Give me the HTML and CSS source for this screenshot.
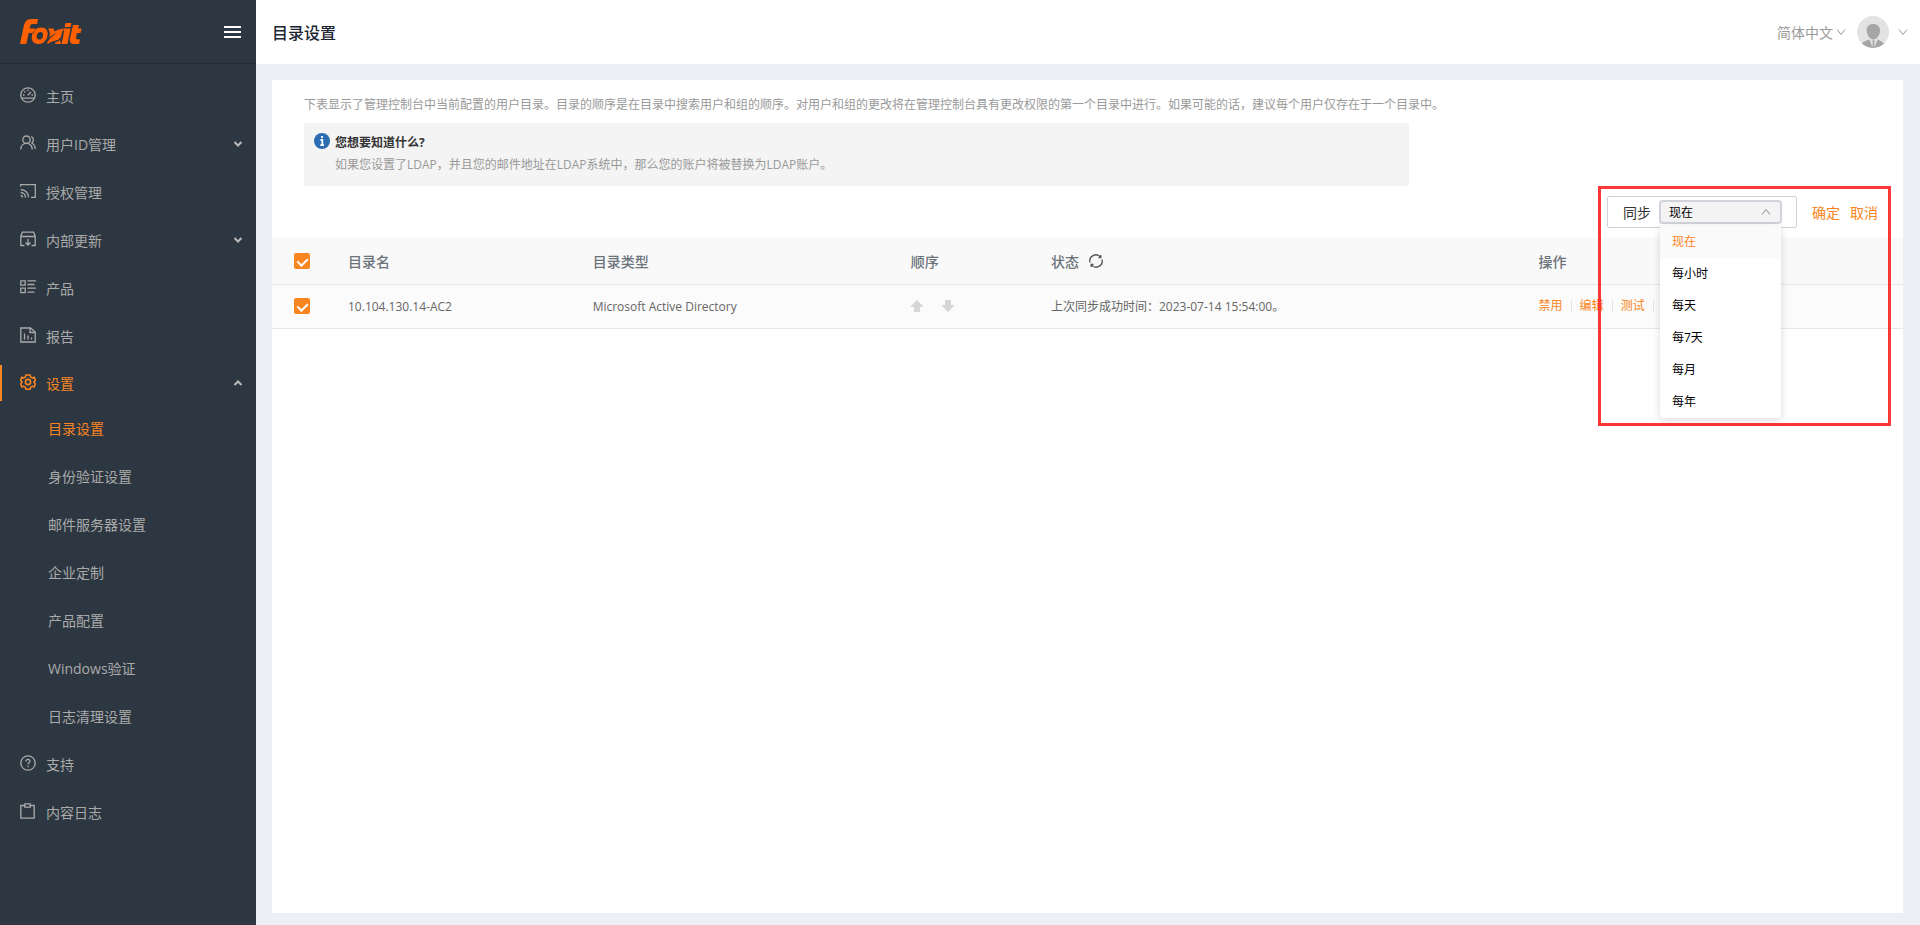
FILE: index.html
```html
<!DOCTYPE html>
<html lang="zh-CN">
<head>
<meta charset="utf-8">
<title>目录设置</title>
<link rel="stylesheet" href="styles.css">
</head>
<body>
<div class="app">
  <aside class="sidebar">
    <div class="brand">
      <a href="#" class="logo" aria-label="Foxit">
        <svg width="62" height="26" viewBox="0 0 62 26" fill="#ff6100">
          <path fill-rule="evenodd" d="M0 25 4 6Q5.500 0 11 0H18L17 5H12Q10.500 5 10 7.500L9.700 9.500H15L14 14H8.700L6.300 25ZM21 8.500C26 8.500 28.500 12 27.500 16.500 26.500 22 23 25 18.500 25 13.500 25 11 21.500 12 17 13 11.500 16.500 8.500 21 8.500ZM20.500 13C18.500 13 17.200 14.500 16.800 17 16.400 19.300 17.200 20.600 19.200 20.600 21.300 20.600 22.600 19.200 23 16.700 23.400 14.300 22.500 13 20.500 13Z"/>
          <path d="M28 9.500H33.500L34.500 12.500Q38 9.800 44 9.500 41.500 13 41.500 16 40.500 21 34 22 30.500 22.500 28 25L27 24Q30 18 37 14 31 16 28.500 19.500 31.500 14 28 9.500ZM35 23.300Q38.500 22.800 40 21L41 25H35.500ZM45.500 4H51.500L50.600 8H44.700ZM44 9.500H50.500L47.500 25H41.500L43.500 15.500ZM53 6H59L58 9.500H61.500L60.500 14H57L56 18.500Q55.700 20.500 58 20.500H60L59 25H54Q49 25 50 19.500Z"/>
        </svg>
      </a>
      <button class="burger" aria-label="折叠菜单"><span></span><span></span><span></span></button>
    </div>
    <nav class="menu">
      <a href="#" class="item">
        <svg class="ico" viewBox="0 0 16 16"><circle cx="8" cy="8" r="7.200"/><path d="M1.800 11.200H14.200M7.800 8.300 11 5M8 2.500V4M3 8H4.500M11.500 8H13M4.300 4.300 5.300 5.300"/></svg>
        <span>主页</span></a>
      <a href="#" class="item">
        <svg class="ico" viewBox="0 0 16 16"><circle cx="6.500" cy="4.700" r="3.700"/><path d="M.8 14.500C.8 10.800 3.200 8.400 6.500 8.400S12.200 10.800 12.200 14.500M11.200 1.500C14 2.500 14 6.500 11.800 8 14 9.200 15.200 11.500 15.200 14"/></svg>
        <span>用户ID管理</span>
        <svg class="caret" viewBox="0 0 10 8"><path d="M1.500 2 5 5.500 8.500 2"/></svg></a>
      <a href="#" class="item">
        <svg class="ico" viewBox="0 0 16 16"><path d="M.7 3.500V1.700H15.300V14.300H11M.7 6.500C5 6.500 8.500 10 8.500 14.500M.7 9.500C3.500 9.500 5.500 11.500 5.500 14.500M.7 12.500Q2.500 12.500 2.500 14.500"/></svg>
        <span>授权管理</span></a>
      <a href="#" class="item">
        <svg class="ico" viewBox="0 0 16 16"><path d="M4.500 14.500H.8V5L2.500 1.200H13.500L15.200 5V14.500H11.500M.8 5.500H15.200M8 8V14M5.500 11.500 8 14 10.500 11.500"/></svg>
        <span>内部更新</span>
        <svg class="caret" viewBox="0 0 10 8"><path d="M1.500 2 5 5.500 8.500 2"/></svg></a>
      <a href="#" class="item">
        <svg class="ico" viewBox="0 0 16 16"><path d="M.8 1.800H5.200V6.200H.8ZM.8 9.200H5.200V13.600H.8ZM7.500 1.800H16M7.500 5.500H14.500M7.500 9.200H16M7.500 13.200H14.500"/></svg>
        <span>产品</span></a>
      <a href="#" class="item">
        <svg class="ico" viewBox="0 0 16 16"><path d="M.8 1H10.500L15.200 5V15H.8ZM10 1V5.500H15M4.500 6.500V12.500M8 8.500V12.500M11.500 10.500V12.500"/></svg>
        <span>报告</span></a>
      <a href="#" class="item open">
        <svg class="ico" viewBox="0 0 16 16"><path d="M6 1H10L10.600 3 12.400 3.900 14.300 3.300 15.400 6.400 13.900 8 15.400 9.800 14.200 12.800 12.200 12.300 10.600 13.200 10 15.200H6L5.400 13.200 3.800 12.300 1.800 12.800 .6 9.800 2.100 8 .6 6.400 1.700 3.300 3.600 3.900 5.400 3Z"/><circle cx="8" cy="8" r="2.600"/></svg>
        <span>设置</span>
        <svg class="caret" viewBox="0 0 10 8"><path d="M1.500 6 5 2.500 8.500 6"/></svg></a>
      <div class="submenu">
        <a href="#" class="current">目录设置</a>
        <a href="#">身份验证设置</a>
        <a href="#">邮件服务器设置</a>
        <a href="#">企业定制</a>
        <a href="#">产品配置</a>
        <a href="#">Windows验证</a>
        <a href="#">日志清理设置</a>
      </div>
      <a href="#" class="item">
        <svg class="ico" viewBox="0 0 16 16"><circle cx="8" cy="8" r="7.200"/><path d="M6 6.500C6 3.800 10 3.800 10 6.300 10 7.800 8 7.800 8 9.500M8 10.700V12.200"/></svg>
        <span>支持</span></a>
      <a href="#" class="item">
        <svg class="ico" viewBox="0 0 16 16"><path d="M4.500 2.500H.8V15.200H14.200V2.500H10.500M4.800 .8H10.200V4.200H4.800Z"/></svg>
        <span>内容日志</span></a>
    </nav>
  </aside>

  <div class="page">
    <header class="topbar">
      <h1>目录设置</h1>
      <div class="account">
        <button class="lang">简体中文<svg class="chev" viewBox="0 0 10 8"><path d="M1 1.500 5 6.500 9 1.500"/></svg></button>
        <button class="user" aria-label="用户">
          <svg width="32" height="32" viewBox="0 0 32 32"><circle cx="16" cy="16" r="16" fill="#e3e3e3"/><path d="M16 8C20.500 8 23 10.500 23 14.500 23 19 20 23.500 16.500 23.500S9.700 19 9.700 14.500C9.700 10.500 12 8 16 8ZM5 27.500Q7 25 12.500 23.500L15.500 31.500 15.700 26 15 24.500H18L17.200 26 17.600 31.500 20.500 23.500Q25 25 27 27.500A16 16 0 0 1 5 27.500Z" fill="#a6a6a6"/></svg>
          <svg class="chev" viewBox="0 0 10 8"><path d="M1 1.500 5 6.500 9 1.500"/></svg>
        </button>
      </div>
    </header>

    <main class="card">
      <p class="intro">下表显示了管理控制台中当前配置的用户目录。目录的顺序是在目录中搜索用户和组的顺序。对用户和组的更改将在管理控制台具有更改权限的第一个目录中进行。如果可能的话，建议每个用户仅存在于一个目录中。</p>
      <section class="notice">
        <svg width="16" height="16" viewBox="0 0 16 16"><circle cx="8" cy="8" r="8" fill="#2b6cb3"/><path d="M8 3V5M6.500 7H8.300V12M6.300 12.200H10" stroke="#fff" stroke-width="1.800" fill="none"/></svg>
        <div>
          <h2>您想要知道什么?</h2>
          <p>如果您设置了LDAP，并且您的邮件地址在LDAP系统中，那么您的账户将被替换为LDAP账户。</p>
        </div>
      </section>

      <div class="toolbar">
        <div class="sync">
          <label for="freq">同步</label>
          <div class="picker">
            <button id="freq" class="picker-value" aria-haspopup="listbox" aria-expanded="true">现在<svg class="chev" viewBox="0 0 10 8"><path d="M1 6.500 5 1.500 9 6.500"/></svg></button>
            <ul class="options" role="listbox">
              <li role="option" aria-selected="true" class="selected">现在</li>
              <li role="option">每小时</li>
              <li role="option">每天</li>
              <li role="option">每7天</li>
              <li role="option">每月</li>
              <li role="option">每年</li>
            </ul>
          </div>
        </div>
        <button class="link">确定</button>
        <button class="link">取消</button>
        <div class="marker"></div>
      </div>

      <table class="grid">
        <colgroup><col class="c-check"><col class="c-name"><col class="c-type"><col class="c-order"><col class="c-state"><col class="c-ops"></colgroup>
        <thead>
          <tr>
            <th><input type="checkbox" checked aria-label="全选"></th>
            <th>目录名</th>
            <th>目录类型</th>
            <th>顺序</th>
            <th><span class="state">状态
              <button class="refresh" aria-label="刷新"><svg width="14" height="14" viewBox="0 0 14 14"><path d="M1 8.500A6 6 0 0 1 11.500 3.200M13 5.500A6 6 0 0 1 2.500 10.800M11.800 1V3.600H9.500M2.200 13V10.400H4.500"/></svg></button></span></th>
            <th>操作</th>
          </tr>
        </thead>
        <tbody>
          <tr>
            <td><input type="checkbox" checked aria-label="选择 10.104.130.14-AC2"></td>
            <td>10.104.130.14-AC2</td>
            <td>Microsoft Active Directory</td>
            <td><span class="order">
              <button aria-label="上移"><svg width="12" height="12" viewBox="0 0 12 12"><path d="M6 0 12 6V7H9V12H3V7H0V6Z"/></svg></button>
              <button aria-label="下移"><svg width="12" height="12" viewBox="0 0 12 12"><path d="M6 12 0 6V5H3V0H9V5H12V6Z"/></svg></button>
            </span></td>
            <td>上次同步成功时间：2023-07-14 15:54:00。</td>
            <td><span class="ops"><a href="#">禁用</a><a href="#">编辑</a><a href="#">测试</a></span></td>
          </tr>
        </tbody>
      </table>
    </main>
  </div>
</div>
</body>
</html>
```
FILE: styles.css
```css
* { box-sizing: border-box; }

body {
  margin: 0;
  font-family: "Open Sans", "Noto Sans CJK SC", sans-serif;
  font-size: 14px;
  color: #333;
  background: #ecf0f5;
}

h1, h2, p, ul { margin: 0; padding: 0; }
a { color: inherit; text-decoration: none; }
button { border: 0; padding: 0; background: none; font: inherit; color: inherit; cursor: pointer; }

.app { display: flex; min-height: 100vh; }

/* Sidebar */
.sidebar { flex: 0 0 256px; background: #2d3741; color: #aaa; }
.brand {
  display: flex;
  align-items: center;
  justify-content: space-between;
  height: 64px;
  padding: 0 15px 0 20px;
  border-bottom: 1px solid #232c35;
}
.logo { display: flex; }
.burger { display: grid; gap: 3px; }
.burger span { width: 17px; height: 2px; background: #fff; }

.menu { padding-top: 8px; }
.item {
  display: flex;
  align-items: center;
  gap: 10px;
  height: 48px;
  padding: 0 13px 0 20px;
}
.item .ico { width: 16px; height: 16px; margin-bottom: 2px; }
.ico, .caret, .chev, .refresh svg { fill: none; stroke: currentColor; stroke-width: 1.300; }
.caret { width: 10px; height: 8px; margin-left: auto; stroke-width: 2; color: #bbb; }
.item.open {
  height: 36px;
  margin-top: 5px;
  padding-left: 18px;
  border-left: 2px solid #f98521;
  color: #f98521;
}
.item.open .ico { stroke-width: 1.600; }
.submenu { padding-top: 3px; }
.submenu a { display: flex; align-items: center; height: 48px; padding-left: 48px; }
.submenu .current { color: #f98521; }

/* Header */
.page { flex: 1; min-width: 0; display: flex; flex-direction: column; }
.topbar {
  display: flex;
  align-items: center;
  justify-content: space-between;
  height: 64px;
  padding: 0 12px 0 16px;
  background: #fff;
}
.topbar h1 { font-size: 16px; font-weight: 500; color: #1b2431; }
.account { display: flex; align-items: center; gap: 11px; color: #999; }
.lang { display: flex; align-items: center; gap: 3px; }
.user { display: flex; align-items: center; gap: 9px; }
.chev { width: 10px; height: 8px; stroke-width: 1; }

/* Card */
.card { flex: 1; margin: 16px 17px 12px 16px; background: #fff; font-size: 12px; }
.intro { padding: 16px 32px 0; line-height: 18px; color: #999; }
.notice {
  display: flex;
  gap: 5px;
  width: 1105px;
  max-width: calc(100% - 64px);
  min-height: 63px;
  margin: 9px 32px 0;
  padding: 10px 10px 9px;
  background: #f4f4f4;
  color: #999;
}
.notice h2 { font-size: 12px; line-height: 20px; font-weight: 700; color: #333; }
.notice p { line-height: 24px; }

.toolbar {
  position: relative;
  display: flex;
  align-items: center;
  justify-content: flex-end;
  gap: 10px;
  padding: 10px 25px 10px 0;
  font-size: 14px;
}
.sync {
  display: flex;
  align-items: center;
  gap: 8px;
  height: 32px;
  margin-right: 5px;
  padding: 0 14px 0 15px;
  border: 1px solid #d0d0d0;
  border-radius: 2px;
}
.picker { position: relative; width: 123px; font-size: 12px; color: #000; }
.picker-value {
  display: flex;
  align-items: center;
  justify-content: space-between;
  width: 100%;
  height: 24px;
  padding: 0 9px 0 8px;
  border: 2px solid #d2d2da;
  border-radius: 4px;
  background: #f4f4f4;
}
.picker-value .chev { color: #888; }
.options {
  position: absolute;
  z-index: 3;
  top: 26px;
  left: 1px;
  right: 1px;
  list-style: none;
  background: #fff;
  border-radius: 0 0 4px 4px;
  box-shadow: 0 2px 8px rgba(0, 0, 0, .15);
}
.options li { height: 32px; padding-left: 12px; line-height: 32px; }
.options .selected { background: #fafafa; color: #f98521; }
.link { color: #f98521; }
.marker {
  position: absolute;
  z-index: 2;
  top: 0;
  right: 12px;
  width: 293px;
  height: 240px;
  border: 3px solid #ff3636;
  pointer-events: none;
}

/* Table */
.grid { width: 100%; border-collapse: collapse; table-layout: fixed; color: #666; }
.grid th, .grid td { padding: 0; text-align: left; border-bottom: 1px solid #e6e6e6; }
.grid th { height: 46px; font-size: 14px; font-weight: 500; background: #f9f9f9; color: #6b737b; }
.grid td { height: 44px; background: #fbfbfb; }
.c-check { width: 76px; }
.c-name { width: 15%; }
.c-type { width: 19.500%; }
.c-order { width: 8.600%; }
.c-state { width: 29.900%; }
input[type="checkbox"] {
  appearance: none;
  display: block;
  width: 16px;
  height: 16px;
  margin: 0 0 0 22px;
  border-radius: 2px;
  background: #f98521;
}
input[type="checkbox"]:checked::before {
  content: "";
  display: block;
  width: 5px;
  height: 8px;
  margin: 3px 5px;
  border: solid #fff;
  border-width: 0 2px 2px 0;
  transform: rotate(45deg);
}
.state { display: flex; align-items: center; gap: 10px; }
.refresh { display: flex; color: #555; }
.order { display: flex; gap: 19px; }
.order button { display: flex; }
.order svg { fill: #d6d6d6; }
.ops { display: flex; align-items: center; color: #f98521; }
.ops a { margin-right: 8px; padding-right: 8px; border-right: 1px solid #e4e4e4; line-height: 12px; }
```
